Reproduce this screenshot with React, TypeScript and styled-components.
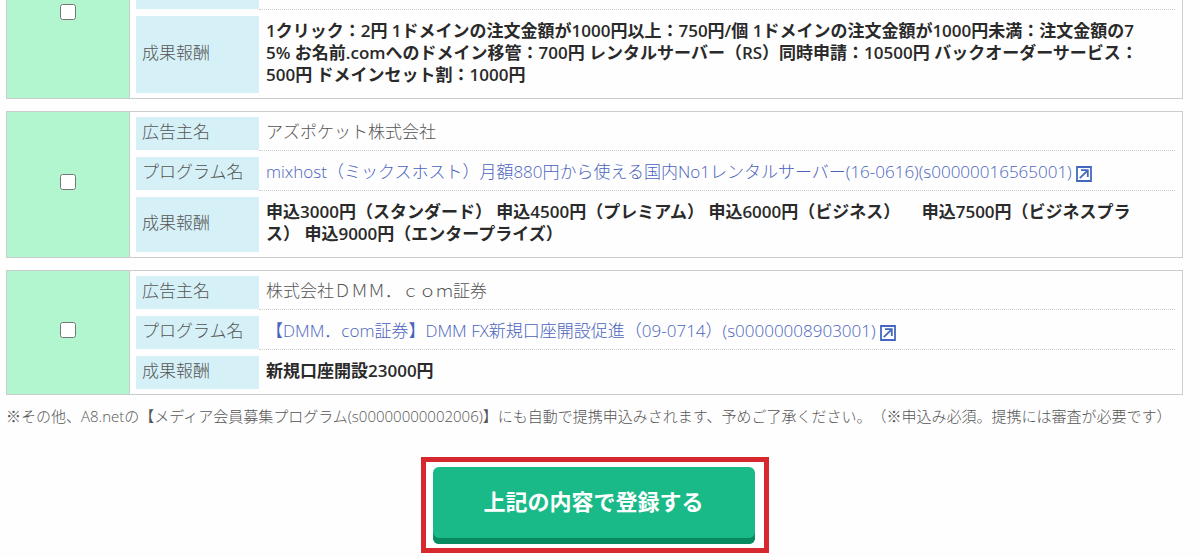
import React from "react";
import styled, { createGlobalStyle } from "styled-components";

const GlobalStyle = createGlobalStyle`
  * { box-sizing: border-box; }
  body {
    margin: 0;
    background: #fefefe;
    color: #555;
    font-family: "Open Sans", "Noto Sans CJK JP", sans-serif;
    font-size: 17px;
    font-weight: 300;
    line-height: 22px;
    text-spacing-trim: space-all;
  }
`;

const Page = styled.main`
  padding: 0 17px 4px 6px;
`;

const ProgramList = styled.div`
  display: flex;
  flex-direction: column;
  gap: 12px;
`;

const Card = styled.section<{ $continued?: boolean }>`
  display: flex;
  border: 1px solid #ccc;
  border-top-width: ${(p) => (p.$continued ? "0" : "1px")};
`;

const SelectCell = styled.label<{ $continued?: boolean }>`
  flex: none;
  display: flex;
  width: 123px;
  justify-content: center;
  align-items: ${(p) => (p.$continued ? "flex-start" : "center")};
  padding: ${(p) => (p.$continued ? "4px 0 0" : "0 0 5px")};
  background: #b2f6d0;
  border-right: 1px solid #c4cfc8;
`;

const Tick = styled.input`
  width: 16px;
  height: 16px;
  margin: 0;
`;

const Details = styled.table<{ $continued?: boolean }>`
  flex: 1;
  display: block;
  min-width: 0;
  padding: ${(p) => (p.$continued ? "0 7px 5px 6px" : "5px 7px 5px 6px")};
`;

const Rows = styled.tbody`
  display: grid;
  gap: 6px;
`;

const Row = styled.tr`
  display: grid;
  grid-template-columns: 123px 1fr;
`;

const Label = styled.th`
  display: flex;
  align-items: center;
  margin-bottom: 1px;
  padding: 0 6px 3px;
  background: #d5f1f7;
  font-weight: 300;
  white-space: nowrap;

  ${Row}:last-child & {
    margin-bottom: 0;
  }
`;

const Value = styled.td<{ $strong?: boolean }>`
  padding: 4px 12px 7px 7px;
  border-bottom: 1px dotted #ccc;
  color: ${(p) => (p.$strong ? "#2a2a2a" : "#555")};
  font-weight: ${(p) => (p.$strong ? 600 : 300)};
  white-space: pre-line;
  word-break: break-all;

  ${Row}:last-child & {
    border-bottom: 0;
  }
`;

const RowEnd = styled(Row)`
  height: 10px;

  > td {
    padding: 0;
  }
`;

const ProgramLink = styled.a`
  color: #4a63bd;
  text-decoration: none;
`;

const LinkIcon = styled.svg`
  width: 16px;
  height: 16px;
  margin-left: 4px;
  vertical-align: -4px;
`;

const Note = styled.p`
  margin: 10px 0 30px;
  font-size: 15px;
`;

const Highlight = styled.div`
  width: fit-content;
  margin: 0 auto;
  padding: 5px 9px 4px 7px;
  border: 5px solid #d7282f;
`;

const SubmitButton = styled.button`
  display: block;
  width: 322px;
  height: 77px;
  padding: 0 0 10px;
  border: 0;
  border-radius: 6px;
  background: #1aba88;
  box-shadow: inset 0 -6px #078a5f;
  color: #fff;
  font: inherit;
  font-size: 22px;
  font-weight: 700;
`;

function NewWindowIcon() {
  return (
    <LinkIcon viewBox="0 0 16 16" fill="none" stroke="#4468bf" strokeWidth="1.8" aria-hidden="true">
      <path d="M1 1h14v14H1z" />
      <path d="M3.8 12.2l7.4-7.4" />
      <path d="M5 4.2h6.8V11" />
    </LinkIcon>
  );
}

type Program = { id: string; advertiser: string; name: string; reward: string };

const domainReward = [
  "1クリック：2円 1ドメインの注文金額が1000円以上：750円/個 1ドメインの注文金額が1000円未満：注文金額の7",
  "5% お名前.comへのドメイン移管：700円 レンタルサーバー（RS）同時申請：10500円 バックオーダーサービス：",
  "500円 ドメインセット割：1000円",
].join("\n");

const programs: Program[] = [
  {
    id: "s00000016565001",
    advertiser: "アズポケット株式会社",
    name: "mixhost（ミックスホスト）月額880円から使える国内No1レンタルサーバー(16-0616)(s00000016565001)",
    reward:
      "申込3000円（スタンダード） 申込4500円（プレミアム） 申込6000円（ビジネス）　 申込7500円（ビジネスプラ\nス） 申込9000円（エンタープライズ）",
  },
  {
    id: "s00000008903001",
    advertiser: "株式会社ＤＭＭ．ｃｏｍ証券",
    name: "【DMM．com証券】DMM FX新規口座開設促進（09-0714）(s00000008903001)",
    reward: "新規口座開設23000円",
  },
];

function ProgramCard({ program }: { program: Program }) {
  return (
    <Card>
      <SelectCell>
        <Tick type="checkbox" aria-label={program.name} />
      </SelectCell>
      <Details>
        <Rows>
          <Row>
            <Label scope="row">広告主名</Label>
            <Value>{program.advertiser}</Value>
          </Row>
          <Row>
            <Label scope="row">プログラム名</Label>
            <Value>
              <ProgramLink href={`#${program.id}`}>
                {program.name}
                <NewWindowIcon />
              </ProgramLink>
            </Value>
          </Row>
          <Row>
            <Label scope="row">成果報酬</Label>
            <Value $strong>{program.reward}</Value>
          </Row>
        </Rows>
      </Details>
    </Card>
  );
}

export default function App() {
  return (
    <>
      <GlobalStyle />
      <Page>
        <ProgramList>
          <Card $continued>
            <SelectCell $continued>
              <Tick type="checkbox" aria-label="お名前.com" />
            </SelectCell>
            <Details $continued>
              <Rows>
                <RowEnd>
                  <Label as="td" />
                  <Value as="td" />
                </RowEnd>
                <Row>
                  <Label scope="row">成果報酬</Label>
                  <Value $strong>{domainReward}</Value>
                </Row>
              </Rows>
            </Details>
          </Card>
          {programs.map((program) => (
            <ProgramCard key={program.id} program={program} />
          ))}
        </ProgramList>
        <Note>
          ※その他、A8.netの【メディア会員募集プログラム(s00000000002006)】にも自動で提携申込みされます、予めご了承ください。（※申込み必須。提携には審査が必要です）
        </Note>
        <Highlight>
          <SubmitButton type="button">上記の内容で登録する</SubmitButton>
        </Highlight>
      </Page>
    </>
  );
}
